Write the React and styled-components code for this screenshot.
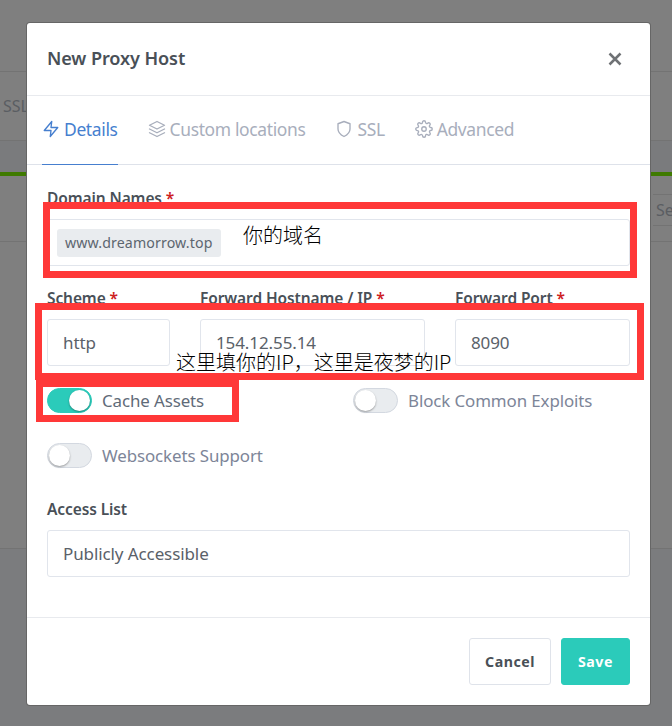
import React from "react";
import styled, { createGlobalStyle } from "styled-components";
import { FiZap, FiLayers, FiShield, FiSettings } from "react-icons/fi";

const Global = createGlobalStyle`
  html, body { margin: 0; padding: 0; height: 100%; overflow: hidden; background: #7f7f7f; }
  * { box-sizing: border-box; }
`;

const Page = styled.div`
  position: relative;
  width: 672px;
  height: 726px;
  overflow: hidden;
  font-family: "Noto Sans", "Noto Sans CJK SC", sans-serif;
  background: #7b7c7e;
`;

/* the dimmed page behind the dialog */
const Backdrop = styled.div`
  display: flex;
  flex-direction: column;
  height: 549px;
  background: #7f7f7f;
  border-bottom: 1px solid #737373;
`;

const BackRow = styled.div`
  height: ${(p) => p.$h}px;
  flex: none;
  display: flex;
  align-items: center;
  justify-content: space-between;
  padding: 0 0 0 3px;
  border-bottom: 1px solid ${(p) => p.$line || "transparent"};
  background: ${(p) => p.$bg || "transparent"};
  color: #5a5d62;
  font-size: 16px;
  overflow: hidden;
`;

const BackSearch = styled.div`
  width: 19px;
  height: 32px;
  margin: 18px 0 0 auto;
  padding-left: 3px;
  flex: none;
  border-top: 1px solid #737373;
  border-bottom: 1px solid #737373;
  color: #5a5d62;
  font-size: 16px;
  line-height: 30px;
  white-space: nowrap;
  overflow: hidden;
`;

const Modal = styled.div`
  position: absolute;
  top: 23px;
  left: 27px;
  width: 623px;
  height: 682px;
  display: flex;
  flex-direction: column;
  background: #fff;
  border-radius: 3px;
  box-shadow: 0 0 0 1px #666;
`;

const Header = styled.div`
  height: 73px;
  flex: none;
  display: flex;
  align-items: center;
  justify-content: space-between;
  padding: 0 20px;
  border-bottom: 1px solid #e8eaee;
`;

const Title = styled.h5`
  margin: 0 0 2px;
  font-size: 18.1px;
  font-weight: 600;
  color: #495057;
  letter-spacing: -0.1px;
`;

const Close = styled.svg`
  width: 14px;
  height: 14px;
  margin-right: 8px;
  stroke: #6f7275;
  stroke-width: 2.5;
`;

const Tabs = styled.div`
  height: 69px;
  flex: none;
  display: flex;
  gap: 30px;
  padding: 0 15px;
  border-bottom: 1px solid #dee2ea;
`;

const Tab = styled.div`
  height: 69px;
  display: flex;
  align-items: center;
  gap: 4px;
  padding-bottom: 2px;
  font-size: 17.45px;
  letter-spacing: -0.35px;
  color: ${(p) => (p.$active ? "#467fcf" : "#a8aebc")};
  border-bottom: 1px solid ${(p) => (p.$active ? "#467fcf" : "transparent")};
  svg {
    width: 18px;
    height: 18px;
    stroke-width: 1.8;
  }
`;

const Body = styled.div`
  flex: 1;
  padding: 22px 20px 0;
`;

const Label = styled.label`
  display: block;
  height: 32px;
  font-size: 15.5px;
  line-height: 22px;
  font-weight: 600;
  color: #495057;
  letter-spacing: -0.1px;
`;

const Star = styled.span`
  color: #cd201f;
`;

const Field = styled.div`
  margin-bottom: ${(p) => p.$mb ?? 21}px;
`;

const Input = styled.div`
  height: 47px;
  display: flex;
  align-items: center;
  padding: 0 15px;
  border: 1px solid #e1e5ec;
  border-radius: 3px;
  background: #fff;
  font-size: 17px;
  color: #5a6169;
  letter-spacing: -0.1px;
`;

const Tag = styled.span`
  height: 28px;
  display: inline-flex;
  align-items: center;
  padding: 0 8px;
  margin-left: -6px;
  border-radius: 3px;
  background: #e9ecef;
  color: #5d6670;
  font-size: 14.2px;
  letter-spacing: 0.12px;
`;

const ForwardGrid = styled.div`
  display: grid;
  grid-template-columns: 123px 225px 175px;
  column-gap: 30px;
  margin-bottom: 22px;
`;

const SwitchGrid = styled.div`
  display: grid;
  grid-template-columns: 276px 276px;
  column-gap: 30px;
  row-gap: 30px;
  margin-bottom: 30px;
`;

const SwitchRow = styled.div`
  display: flex;
  align-items: center;
  gap: 10px;
  height: 25px;
  font-size: 16.9px;
  letter-spacing: -0.1px;
  color: ${(p) => (p.$on ? "#5f6b78" : "#7d8598")};
`;

const Track = styled.span`
  position: relative;
  display: block;
  width: 45px;
  height: 25px;
  border-radius: 13px;
  border: 1px solid ${(p) => (p.$on ? "#2bcbba" : "#d3d8e0")};
  background: ${(p) => (p.$on ? "#2bcbba" : "#e9ecef")};
`;

const Knob = styled.span`
  position: absolute;
  top: 1px;
  left: ${(p) => (p.$on ? "21px" : "1px")};
  width: 21px;
  height: 21px;
  border-radius: 50%;
  background: #fff;
  box-shadow: 0 1px 2px rgba(0, 0, 0, 0.35);
`;

const Footer = styled.div`
  height: 88px;
  flex: none;
  display: flex;
  align-items: flex-start;
  justify-content: flex-end;
  gap: 10px;
  padding: 20px;
  border-top: 1px solid #e8eaee;
`;

const Button = styled.button`
  height: 47px;
  width: ${(p) => p.$w}px;
  padding: 0;
  border-radius: 3px;
  font-family: "Noto Sans", sans-serif;
  font-size: 14.2px;
  font-weight: 700;
  letter-spacing: 0.5px;
  border: 1px solid ${(p) => (p.$primary ? "#2bcbba" : "#dfe3ea")};
  background: ${(p) => (p.$primary ? "#2bcbba" : "#fff")};
  color: ${(p) => (p.$primary ? "#fff" : "#495057")};
`;

/* red boxes somebody drew over the screenshot */
const RedBox = styled.div`
  position: absolute;
  left: ${(p) => p.$x}px;
  top: ${(p) => p.$y}px;
  width: ${(p) => p.$w}px;
  height: ${(p) => p.$h}px;
  border: 7px solid #ff3838;
`;

const Note = styled.div`
  position: absolute;
  left: ${(p) => p.$x}px;
  top: ${(p) => p.$y}px;
  font-family: "Noto Sans CJK SC", sans-serif;
  font-size: 20px;
  font-weight: 300;
  line-height: 24px;
  color: #000;
  white-space: nowrap;
`;

const Switch = ({ on, children }) => (
  <SwitchRow $on={on}>
    <Track $on={on}>
      <Knob $on={on} />
    </Track>
    {children}
  </SwitchRow>
);

export default function App() {
  return (
    <Page>
      <Global />
      <Backdrop>
        <BackRow $h={72} $line="#737373" />
        <BackRow $h={69} $line="#737373">SSL</BackRow>
        <BackRow $h={31} $bg="#7a7b7d" />
        <BackRow $h={4} $bg="#3f7a00" />
        <BackSearch>Search</BackSearch>
        <BackRow $h={16} $line="#737373" />
      </Backdrop>
      <Modal>
        <Header>
          <Title>New Proxy Host</Title>
          <Close viewBox="0 0 14 14" fill="none">
            <path d="M1.5 1.5l11 11M12.5 1.5l-11 11" />
          </Close>
        </Header>
        <Tabs>
          <Tab $active>
            <FiZap />
            Details
          </Tab>
          <Tab>
            <FiLayers />
            Custom locations
          </Tab>
          <Tab>
            <FiShield />
            SSL
          </Tab>
          <Tab>
            <FiSettings />
            Advanced
          </Tab>
        </Tabs>
        <Body>
          <Field>
            <Label>
              Domain Names <Star>*</Star>
            </Label>
            <Input>
              <Tag>www.dreamorrow.top</Tag>
            </Input>
          </Field>
          <ForwardGrid>
            <div>
              <Label>
                Scheme <Star>*</Star>
              </Label>
              <Input>http</Input>
            </div>
            <div>
              <Label>
                Forward Hostname / IP <Star>*</Star>
              </Label>
              <Input>154.12.55.14</Input>
            </div>
            <div>
              <Label>
                Forward Port <Star>*</Star>
              </Label>
              <Input>8090</Input>
            </div>
          </ForwardGrid>
          <SwitchGrid>
            <Switch on>Cache Assets</Switch>
            <Switch>Block Common Exploits</Switch>
            <Switch>Websockets Support</Switch>
          </SwitchGrid>
          <Field $mb={0}>
            <Label>Access List</Label>
            <Input>Publicly Accessible</Input>
          </Field>
        </Body>
        <Footer>
          <Button $w={82}>Cancel</Button>
          <Button $w={69} $primary>
            Save
          </Button>
        </Footer>
      </Modal>
      <RedBox $x={43} $y={202} $w={594} $h={76} />
      <RedBox $x={35} $y={303} $w={609} $h={77} />
      <RedBox $x={36} $y={380} $w={203} $h={42} />
      <Note $x={243} $y={223}>你的域名</Note>
      <Note $x={176} $y={350}>这里填你的IP，这里是夜梦的IP</Note>
    </Page>
  );
}
